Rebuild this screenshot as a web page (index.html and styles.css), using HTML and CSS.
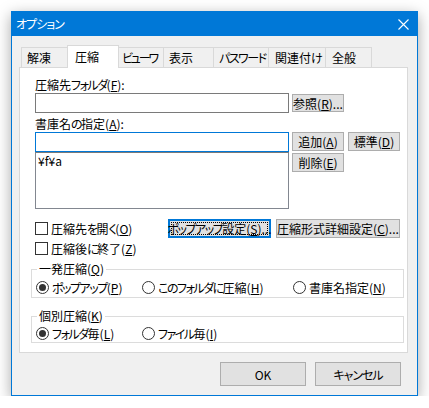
FILE: index.html
```html
<!DOCTYPE html>
<html lang="ja">
<head>
<meta charset="utf-8">
<title>オプション</title>
<link rel="stylesheet" href="styles.css">
</head>
<body>
<div class="window">
  <div class="titlebar">
    <span class="title"><span class="k">オプション</span></span>
    <svg class="close" width="11" height="11" viewBox="0 0 11 11"><path d="M0.5 0.5L10.5 10.5M10.5 0.5L0.5 10.5" stroke="#fff" stroke-width="1.1" fill="none"/></svg>
  </div>
  <div class="content">
    <div class="tabs">
      <div class="tab t1">解凍</div>
      <div class="tab sel">圧縮</div>
      <div class="tab t3"><span class="k">ビューワ</span></div>
      <div class="tab t4">表示</div>
      <div class="tab t5"><span class="k">パスワード</span></div>
      <div class="tab t6">関連付<span class="k">け</span></div>
      <div class="tab t7">全般</div>
    </div>
    <div class="panel">
      <div class="label l1">圧縮先<span class="k">フォルダ</span>(<u>F</u>):</div>
      <div class="row r1">
        <div class="field"></div>
        <div class="btn b-ref">参照(<u>R</u>)...</div>
      </div>
      <div class="label l2">書庫名<span class="k">の</span>指定(<u>A</u>):</div>
      <div class="row r2">
        <div class="namecol">
          <div class="field focus"></div>
          <div class="listbox">¥f¥a</div>
        </div>
        <div class="btngrid">
          <div class="btn">追加(<u>A</u>)</div>
          <div class="btn">標準(<u>D</u>)</div>
          <div class="btn">削除(<u>E</u>)</div>
        </div>
      </div>
      <div class="opts">
        <div class="check"><span class="box"></span><span>圧縮先<span class="k">を</span>開<span class="k">く</span>(<u>O</u>)</span></div>
        <div class="btn focused"><span class="k">ポップアップ</span>設定(<u>S</u>)...</div>
        <div class="btn">圧縮形式詳細設定(<u>C</u>)...</div>
        <div class="check c2"><span class="box"></span><span>圧縮後<span class="k">に</span>終了(<u>Z</u>)</span></div>
      </div>
      <fieldset class="group g1">
        <legend>一発圧縮(<u>Q</u>)</legend>
        <div class="radios">
          <div class="radio on"><span class="circle"></span><span><span class="k">ポップアップ</span>(<u>P</u>)</span></div>
          <div class="radio"><span class="circle"></span><span><span class="k">このフォルダに</span>圧縮(<u>H</u>)</span></div>
          <div class="radio"><span class="circle"></span><span>書庫名指定(<u>N</u>)</span></div>
        </div>
      </fieldset>
      <fieldset class="group g2">
        <legend>個別圧縮(<u>K</u>)</legend>
        <div class="radios">
          <div class="radio on"><span class="circle"></span><span><span class="k">フォルダ</span>毎(<u>L</u>)</span></div>
          <div class="radio"><span class="circle"></span><span><span class="k">ファイル</span>毎(<u>I</u>)</span></div>
        </div>
      </fieldset>
    </div>
    <div class="footer">
      <div class="btn big">OK</div>
      <div class="btn big"><span class="k">キャンセル</span></div>
    </div>
  </div>
</div>
</body>
</html>
```

FILE: styles.css
```css
* { box-sizing: border-box; }
html, body { margin: 0; padding: 0; background: #fff; }
body {
  padding: 11px 0 0 11px;
  font: 12px/17px "Noto Sans CJK JP", "Noto Sans", sans-serif;
  font-feature-settings: "palt";
  color: #000;
}
u { text-underline-offset: 1px; text-decoration-thickness: 1px; }
.k { letter-spacing: -1.5px; }

.window {
  width: 407px;
  height: 385px;
  border: 1px solid #0078d7;
  background: #f0f0f0;
  box-shadow: 0 4px 14px rgba(0, 0, 0, 0.35);
  display: flex;
  flex-direction: column;
}
.titlebar {
  height: 24px;
  flex: none;
  background: #0078d7;
  color: #fff;
  display: flex;
  align-items: center;
  justify-content: space-between;
  padding: 0 8px 0 4px;
}
.title { line-height: 24px; }
.title .k { letter-spacing: -1px; }
.close { display: block; margin-top: 1px; }

.content { padding: 9px 9px 0 7px; }

.tabs {
  display: flex;
  align-items: flex-end;
  height: 23px;
  margin-bottom: -1px;
  padding-left: 2px;
  position: relative;
  z-index: 1;
}
.tab {
  height: 20px;
  flex: none;
  margin-bottom: 1px;
  border-top: 1px solid #d9d9d9;
  border-left: 1px solid #d9d9d9;
  background: #f0f0f0;
  padding-left: 5px;
  line-height: 19px;
  white-space: nowrap;
}
.tab.sel {
  height: 23px;
  margin-bottom: 0;
  background: #fff;
  border-right: 1px solid #d9d9d9;
  padding: 1px 0 0 7px;
}
.t1 { width: 46px; }
.sel { width: 52px; }
.t3 { width: 44px; border-left: none; padding-left: 3px; }
.t3 .k { letter-spacing: -2.2px; }
.t4 { width: 50px; }
.t5 { width: 55px; }
.t6 { width: 57px; padding-left: 6px; }
.t7 { width: 47px; border-right: 1px solid #d9d9d9; padding-left: 6px; }

.panel {
  height: 286px;
  border: 1px solid #d9d9d9;
  background: #fff;
  padding: 8px 3px 0 15px;
}
.label { line-height: 17px; white-space: nowrap; }
.l2 { margin-top: 2px; }

.row { display: flex; gap: 3px; }
.r1 { align-items: center; height: 20px; }
.field {
  width: 254px;
  height: 20px;
  border: 1px solid #7a7a7a;
  background: #fff;
}
.field.focus { border-color: #0078d7; }
.namecol { width: 254px; display: flex; flex-direction: column; }
.listbox {
  height: 57px;
  border: 1px solid #828790;
  border-top-color: #7a7a7a;
  padding: 0 2px;
  line-height: 15px;
}

.btn {
  background: #e1e1e1;
  border: 1px solid #adadad;
  height: 19px;
  display: flex;
  align-items: center;
  justify-content: center;
  white-space: nowrap;
  line-height: 15px;
  position: relative;
}
.b-ref { width: 52px; height: 18px; }
.btngrid {
  display: grid;
  grid-template-columns: 52px 52px;
  grid-auto-rows: 19px;
  column-gap: 4px;
  row-gap: 2px;
}
.btn.focused {
  border-color: #0078d7;
  box-shadow: inset 0 0 0 1px #0078d7;
}
.btn.focused::after {
  content: "";
  position: absolute;
  inset: 2px;
  border: 1px dotted #000;
}

.opts {
  margin-top: 10px;
  display: grid;
  grid-template-columns: 128px 103px 124px;
  grid-template-rows: 19px 19px;
  column-gap: 5px;
  row-gap: 1px;
}
.check {
  display: flex;
  align-items: center;
  gap: 3px;
  white-space: nowrap;
}
.check.c2 { grid-column: 1 / -1; }
.box {
  width: 13px;
  height: 13px;
  border: 1px solid #333;
  background: #fff;
  flex: none;
}

.group {
  margin: 3px 0 0 -4px;
  padding: 0 4px;
  border: 1px solid #dcdcdc;
  min-width: 0;
}
.group legend {
  padding: 0 2px;
  margin-left: 1px;
  line-height: 16px;
  white-space: nowrap;
}
.g2 { margin-top: 10px; }
.radios {
  display: grid;
  grid-template-columns: 106px 151px auto;
  align-items: center;
}
.g1 .radios { height: 20px; }
.g2 .radios { height: 18px; }
.radio {
  display: flex;
  align-items: center;
  gap: 3px;
  white-space: nowrap;
}
.circle {
  width: 13px;
  height: 13px;
  border: 1px solid #333;
  border-radius: 50%;
  background: #fff;
  flex: none;
  display: flex;
  align-items: center;
  justify-content: center;
}
.radio.on .circle::after {
  content: "";
  width: 7px;
  height: 7px;
  border-radius: 50%;
  background: #333;
}

.footer {
  display: flex;
  justify-content: flex-end;
  gap: 9px;
  padding: 9px 7px 0 0;
}
.btn.big { width: 86px; height: 24px; }
.btn.big .k { letter-spacing: -1px; }
```
